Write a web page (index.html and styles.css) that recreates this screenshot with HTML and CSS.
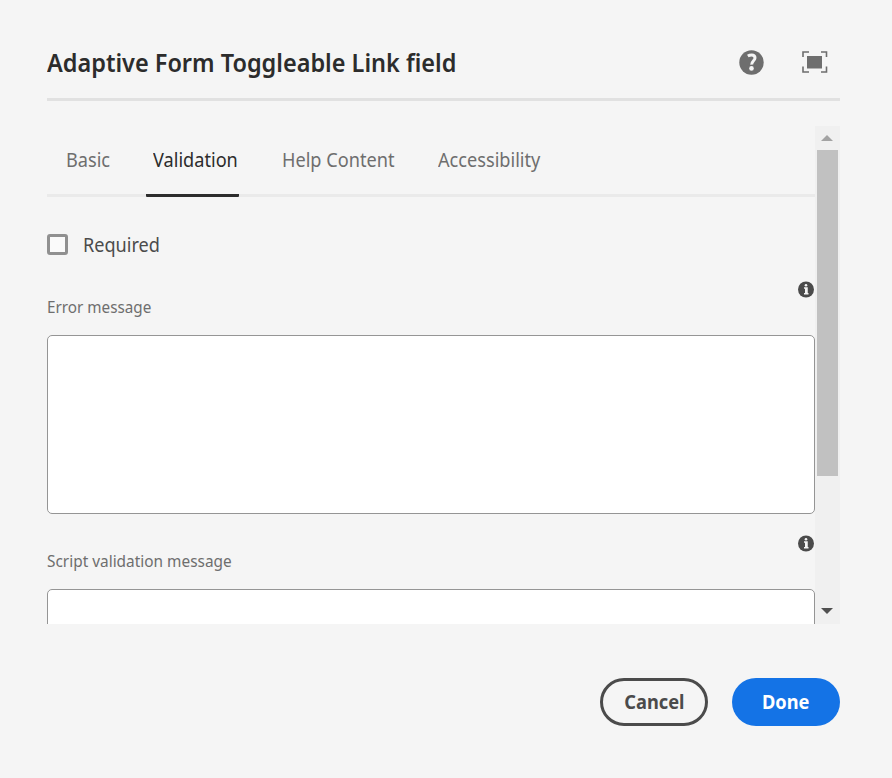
FILE: index.html
```html
<!DOCTYPE html>
<html lang="en">
<head>
<meta charset="utf-8">
<title>Adaptive Form Toggleable Link field</title>
<link rel="stylesheet" href="styles.css">
</head>
<body>
<main class="dialog">
  <header class="header">
    <h1 class="title">Adaptive Form Toggleable Link field</h1>
    <div class="tools">
      <svg class="help" width="25" height="25" viewBox="0 0 25 25"><circle cx="12.5" cy="12.5" r="12.2" fill="#6e6e6e"/><path d="M8.8 6C10 5.3 11.4 5 12.8 5C15.2 5 16 6.4 16 8C16 10.7 12.6 10.9 12.7 14.6" fill="none" stroke="#f5f5f5" stroke-width="3"/><circle cx="12.5" cy="18.4" r="2.3" fill="#f5f5f5"/></svg>
      <svg width="26" height="22" viewBox="0 0 26 22"><path d="M1 6V1H7M19 1H24.5V6M24.5 15.5V21H19M7 21H1V15.5" fill="none" stroke="#6e6e6e" stroke-width="1.6"/><path d="M5 5H20V17.5H5Z" fill="#6e6e6e"/></svg>
    </div>
  </header>
  <section class="viewport">
    <div class="content">
      <nav class="tabs">
        <a class="tab basic"><span>Basic</span></a>
        <a class="tab validation"><span>Validation</span></a>
        <a class="tab help-content"><span>Help Content</span></a>
        <a class="tab accessibility"><span>Accessibility</span></a>
      </nav>
      <label class="check"><span class="box"></span><span class="check-label">Required</span></label>
      <div class="field">
        <svg class="info" width="16" height="17" viewBox="0 -.5 16 17"><circle cx="8" cy="8" r="8" fill="#4b4b4b"/><path d="M6 6.5H9V12M6 12.2H10.5" fill="none" stroke="#f5f5f5" stroke-width="1.5"/><path d="M7 6.5H9V12H7Z" fill="#f5f5f5"/><circle cx="8" cy="3.8" r="1.3" fill="#f5f5f5"/></svg>
        <span class="label error">Error message</span>
        <div class="area"></div>
      </div>
      <div class="field">
        <svg class="info" width="16" height="17" viewBox="0 -.5 16 17"><circle cx="8" cy="8" r="8" fill="#4b4b4b"/><path d="M6 6.5H9V12M6 12.2H10.5" fill="none" stroke="#f5f5f5" stroke-width="1.5"/><path d="M7 6.5H9V12H7Z" fill="#f5f5f5"/><circle cx="8" cy="3.8" r="1.3" fill="#f5f5f5"/></svg>
        <span class="label script">Script validation message</span>
        <div class="area"></div>
      </div>
    </div>
    <div class="scrollbar">
      <svg class="up" width="12" height="6" viewBox="0 0 12 6"><path d="M0 6L6 0L12 6Z" fill="#a3a3a3"/></svg>
      <div class="thumb"></div>
      <svg class="down" width="12" height="6" viewBox="0 0 12 6"><path d="M0 0L6 6L12 0Z" fill="#505050"/></svg>
    </div>
  </section>
  <footer class="footer">
    <button class="button cancel"><span>Cancel</span></button>
    <button class="button done"><span>Done</span></button>
  </footer>
</main>
</body>
</html>
```
FILE: styles.css
```css
* { box-sizing: border-box; }
body { margin: 0; background: #f5f5f5; font-family: "Noto Sans", "Open Sans", sans-serif; color: #4b4b4b; }
svg { display: block; flex: none; }
.dialog { width: 892px; height: 778px; padding: 26px 52px 0 47px; overflow: hidden; }
.header { height: 75px; border-bottom: 3px solid #e1e1e1; display: flex; align-items: center; justify-content: space-between; }
.title { margin: 0; font-size: 25px; font-weight: 600; line-height: 36px; color: #2c2c2c; white-space: nowrap; transform: scaleX(.939); transform-origin: left; }
.tools { display: flex; align-items: center; gap: 38px; padding-right: 12px; }
.viewport { display: flex; height: 498px; margin-top: 25px; overflow: hidden; }
.content { width: 768px; flex: none; }
.tabs { display: flex; height: 71px; border-bottom: 3px solid #eaeaea; padding-left: 12px; gap: 30px; }
.tab { height: 71px; padding: 20px 7px 0; line-height: 28px; font-size: 19px; color: #6e6e6e; white-space: nowrap; flex: none; }
.tab span { display: inline-block; transform: scaleX(.955); transform-origin: left; }
.basic { width: 57px; }
.validation { width: 93px; color: #2c2c2c; border-bottom: 3px solid #2c2c2c; border-radius: 1px; }
.help-content { width: 126px; margin-left: 6px; }
.accessibility { width: 120px; }
.check { display: flex; align-items: center; height: 28px; margin-top: 33px; font-size: 19px; line-height: 28px; }
.box { width: 21px; height: 21px; margin-right: 15px; border: 3px solid #909090; border-radius: 3px; background: #fafafa; }
.check-label { position: relative; top: 1px; transform: scaleX(.953); transform-origin: left; }
.field { display: flex; flex-direction: column; height: 254px; }
.check + .field { margin-top: 23px; }
.info { align-self: flex-end; margin-right: 1px; }
.label { height: 37px; line-height: 18px; font-size: 16.5px; color: #6e6e6e; white-space: nowrap; align-self: flex-start; transform-origin: left; }
.error { transform: scaleX(.925); }
.script { transform: scaleX(.933); }
.area { height: 179px; flex: none; border: 1px solid #959595; border-radius: 5px; background: #fff; }
.scrollbar { width: 25px; height: 498px; flex: none; background: #f0f0f0; display: flex; flex-direction: column; align-items: center; padding: 9px 1px 0 0; }
.thumb { width: 21px; height: 326px; margin-top: 9px; background: #c1c1c1; }
.down { margin-top: 132px; }
.footer { display: flex; justify-content: flex-end; gap: 24px; margin-top: 54px; }
.button { width: 108px; height: 48px; padding: 0; border-radius: 24px; font-family: inherit; font-size: 19px; font-weight: 700; line-height: 26px; }
.button span { display: inline-block; transform: scaleX(.96); }
.cancel { border: 3px solid #4b4b4b; background: transparent; color: #4b4b4b; }
.done { border: 0; background: #1473e6; color: #fff; }
```
